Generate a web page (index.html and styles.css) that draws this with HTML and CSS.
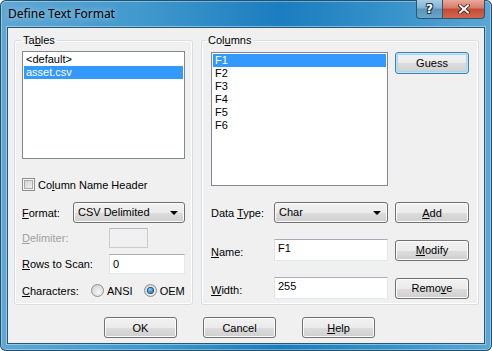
FILE: index.html
```html
<!DOCTYPE html>
<html>
<head>
    <title>Define Text Format</title>
    <link rel="stylesheet" href="styles.css">
</head>
<body>
    <div class="window">
        <div class="titlebar">
            <span class="title">Define Text Format</span>
            <div class="caption-buttons">
                <span class="cap-btn cap-help">?</span>
                <span class="cap-btn cap-close">
                    <svg width="12" height="10" viewBox="0 0 12 10">
                        <path d="M2 1.5 L10 8.5 M10 1.5 L2 8.5" stroke="#3a1a14" stroke-width="3.6" stroke-linecap="square"/>
                        <path d="M2 1.5 L10 8.5 M10 1.5 L2 8.5" stroke="#fff" stroke-width="2" stroke-linecap="square"/>
                    </svg>
                </span>
            </div>
        </div>
        <div class="client">
            <div class="groups">
                <fieldset class="group group-tables">
                    <legend>Ta<u>b</u>les</legend>
                    <div class="tables-body">
                        <div class="listbox tables-list">
                            <div class="item">&lt;default&gt;</div>
                            <div class="item selected">asset.csv</div>
                        </div>
                        <div class="check-row">
                            <span class="checkbox"></span>
                            <span>Co<u>l</u>umn Name Header</span>
                        </div>
                        <div class="field-row format-row">
                            <span class="label label-format"><u>F</u>ormat:</span>
                            <div class="combo combo-wide">CSV Delimited<span class="arrow"></span></div>
                        </div>
                        <div class="field-row delim-row">
                            <span class="label label-long disabled"><u>D</u>elimiter:</span>
                            <div class="edit edit-disabled"></div>
                        </div>
                        <div class="field-row scan-row">
                            <span class="label label-long"><u>R</u>ows to Scan:</span>
                            <div class="edit edit-fill">0</div>
                        </div>
                        <div class="field-row chars-row">
                            <span class="label label-chars"><u>C</u>haracters:</span>
                            <span class="radio"></span>
                            <span class="radio-text">ANSI</span>
                            <span class="radio checked"></span>
                            <span class="radio-text">OEM</span>
                        </div>
                    </div>
                </fieldset>
                <fieldset class="group group-columns">
                    <legend>Col<u>u</u>mns</legend>
                    <div class="columns-body">
                        <div class="listbox columns-list">
                            <div class="item selected">F1</div>
                            <div class="item">F2</div>
                            <div class="item">F3</div>
                            <div class="item">F4</div>
                            <div class="item">F5</div>
                            <div class="item">F6</div>
                        </div>
                        <button class="btn btn-default btn-guess">Guess</button>

                        <span class="label">Data <u>T</u>ype:</span>
                        <div class="combo">Char<span class="arrow"></span></div>
                        <button class="btn"><u>A</u>dd</button>

                        <span class="label label-low"><u>N</u>ame:</span>
                        <div class="edit edit-top">F1</div>
                        <button class="btn"><u>M</u>odify</button>

                        <span class="label label-low"><u>W</u>idth:</span>
                        <div class="edit edit-top">255</div>
                        <button class="btn">Remo<u>v</u>e</button>
                    </div>
                </fieldset>
            </div>
            <div class="dialog-buttons">
                <button class="btn btn-wide">OK</button>
                <button class="btn btn-wide">Cancel</button>
                <button class="btn btn-wide"><u>H</u>elp</button>
            </div>
        </div>
    </div>
</body>
</html>
```

FILE: styles.css
```css
    body {
        margin: 0;
        background-color: #ffffff;
        font-family: "Liberation Sans", Arial, sans-serif;
        font-size: 11px;
        color: #000;
    }

    .window {
        width: 492px;
        height: 351px;
        box-sizing: border-box;
        padding: 0 7px 7px 7px;
        display: flex;
        flex-direction: column;
        border-radius: 6px;
        background: linear-gradient(90deg, #5fa7d3 0%, #3f98cc 30%, #1a7dbf 57%, #3793ca 80%, #5ca7d4 100%);
        box-shadow: inset 0 0 0 1px #24506f, inset 0 0 0 2px rgba(255, 255, 255, 0.35);
    }

    .titlebar {
        height: 27px;
        display: flex;
        align-items: flex-start;
        justify-content: space-between;
    }

    .title {
        margin-top: 6px;
        margin-left: 1px;
        font-family: "Noto Sans", "Open Sans", sans-serif;
        font-size: 12px;
        line-height: 16px;
        color: #000;
        text-shadow: 0 0 6px rgba(255, 255, 255, 0.7);
    }

    .caption-buttons {
        display: flex;
        height: 19px;
    }

    .cap-btn {
        display: flex;
        align-items: center;
        justify-content: center;
        height: 19px;
        box-sizing: border-box;
        border: 1px solid #31546c;
        border-top: none;
    }

    .cap-help {
        width: 26px;
        border-radius: 0 0 0 4px;
        border-right: none;
        background: linear-gradient(#a9cde4 0%, #82b3d3 45%, #5a93bb 50%, #6aa5cb 100%);
        color: #fff;
        font-family: "DejaVu Sans", sans-serif;
        font-weight: bold;
        font-size: 12px;
        text-shadow: 0 0 1px #203848, 1px 1px 0 #203848, -1px -1px 0 #203848, 1px -1px 0 #203848, -1px 1px 0 #203848;
    }

    .cap-close {
        width: 43px;
        border-radius: 0 0 4px 0;
        background: linear-gradient(#e9a99b 0%, #d87a68 45%, #c44a33 50%, #d2664d 100%);
    }

    .client {
        flex: 1;
        min-width: 0;
        border: 1px solid #2a5674;
        box-shadow: 0 0 0 1px rgba(180, 225, 245, 0.6);
        background-color: #f0f0f0;
        display: flex;
        flex-direction: column;
    }

    .groups {
        display: flex;
        gap: 8px;
        padding: 5px 5px 0 6px;
    }

    .group {
        margin: 0;
        padding: 0;
        min-width: 0;
        min-inline-size: 0;
        flex: none;
        height: 272px;
        box-sizing: border-box;
        border: 1px solid #d5dfe5;
        border-radius: 3px;
        box-shadow: inset 0 0 0 1px #ffffff;
    }

    .group legend {
        padding: 0 2px;
        margin-left: 6px;
        line-height: 14px;
    }

    .group-tables {
        width: 179px;
    }

    .group-columns {
        width: 278px;
    }

    .group-columns legend {
        margin-left: 4px;
    }

    .tables-body {
        padding: 4px 7px 0 7px;
        display: flex;
        flex-direction: column;
    }

    .listbox {
        box-sizing: border-box;
        border: 1px solid #828790;
        background-color: #fff;
        padding: 1px;
    }

    .item {
        height: 13px;
        line-height: 13px;
        padding-left: 2px;
        white-space: nowrap;
    }

    .item.selected {
        background-color: #3399ff;
        color: #fff;
    }

    .tables-list {
        height: 108px;
    }

    .check-row {
        margin-top: 19px;
        display: flex;
        align-items: center;
        gap: 3px;
        height: 13px;
    }

    .checkbox {
        width: 13px;
        height: 13px;
        box-sizing: border-box;
        border: 1px solid #8e8f8f;
        background: linear-gradient(135deg, #c9c9c9 0%, #e6e6e6 60%, #f7f7f7 100%);
        box-shadow: inset 0 0 0 1px #f4f4f4, inset 0 0 0 2px #ababab;
    }

    .field-row {
        display: flex;
        align-items: center;
    }

    .format-row {
        margin-top: 11px;
    }

    .delim-row {
        margin-top: 5px;
    }

    .scan-row {
        margin-top: 6px;
    }

    .chars-row {
        margin-top: 10px;
        height: 13px;
    }

    .label {
        white-space: nowrap;
    }

    .label-format {
        width: 51px;
    }

    .label-long {
        width: 87px;
    }

    .label-chars {
        width: 69px;
        flex: none;
    }

    .disabled {
        color: #a0a0a0;
    }

    .combo {
        position: relative;
        height: 21px;
        box-sizing: border-box;
        border: 1px solid #707070;
        border-radius: 3px;
        padding-left: 4px;
        line-height: 19px;
        background: linear-gradient(#f2f2f2 0%, #ebebeb 50%, #dddddd 50%, #cfcfcf 100%);
        box-shadow: inset 0 0 0 1px #fcfcfc;
    }

    .combo-wide {
        flex: 1;
    }

    .arrow {
        position: absolute;
        right: 6px;
        top: 8px;
        width: 0;
        height: 0;
        border-left: 4px solid transparent;
        border-right: 4px solid transparent;
        border-top: 4px solid #000;
    }

    .edit {
        height: 20px;
        box-sizing: border-box;
        border: 1px solid #e3e9ef;
        border-top-color: #abadb3;
        border-left-color: #e2e3ea;
        background-color: #fff;
        padding-left: 3px;
        line-height: 18px;
    }

    .edit-disabled {
        width: 39px;
        background-color: #f0f0f0;
        border-color: #c9cccf;
        border-top-color: #b5b8bc;
    }

    .edit-fill {
        flex: 1;
    }

    .edit-top {
        height: 22px;
        line-height: 16px;
    }

    .radio {
        flex: none;
        width: 13px;
        height: 13px;
        box-sizing: border-box;
        border-radius: 50%;
        border: 1px solid #8e8f8f;
        background: radial-gradient(circle at 60% 65%, #f6f6f6 0%, #dcdcdc 60%, #c8c8c8 100%);
        display: flex;
        align-items: center;
        justify-content: center;
    }

    .radio.checked {
        margin-left: 11px;
    }

    .radio.checked::after {
        content: "";
        width: 5px;
        height: 5px;
        border-radius: 50%;
        background: radial-gradient(circle at 40% 35%, #9fe2ff 0%, #2c86cc 55%, #17508a 100%);
        box-shadow: 0 0 0 1px #1f4f7c;
    }

    .radio-text {
        margin-left: 3px;
        white-space: nowrap;
    }

    .columns-body {
        padding: 5px 0 0 9px;
        display: grid;
        grid-template-columns: 56px 114px 74px;
        grid-template-rows: 134px 21px 22px 22px;
        column-gap: 7px;
        row-gap: 16px;
        align-items: center;
    }

    .columns-list {
        grid-column: 1 / 3;
        height: 134px;
        align-self: stretch;
    }

    .label-low {
        padding-top: 3px;
    }

    .btn {
        height: 21px;
        box-sizing: border-box;
        border: 1px solid #707070;
        border-radius: 3px;
        background: linear-gradient(#f2f2f2 0%, #ebebeb 50%, #dddddd 50%, #cfcfcf 100%);
        box-shadow: inset 0 0 0 1px #fcfcfc;
        font-family: "Liberation Sans", Arial, sans-serif;
        font-size: 11px;
        color: #000;
        padding: 0;
    }

    .btn-guess {
        align-self: start;
        height: 22px;
    }

    .btn-default {
        border-color: #3c7fb1;
        box-shadow: inset 0 0 0 1px #c4e5f6, inset 0 0 0 2px #a3d8f3;
    }

    .dialog-buttons {
        display: flex;
        gap: 26px;
        padding-left: 96px;
        margin-top: 12px;
    }

    .btn-wide {
        width: 73px;
    }
```
